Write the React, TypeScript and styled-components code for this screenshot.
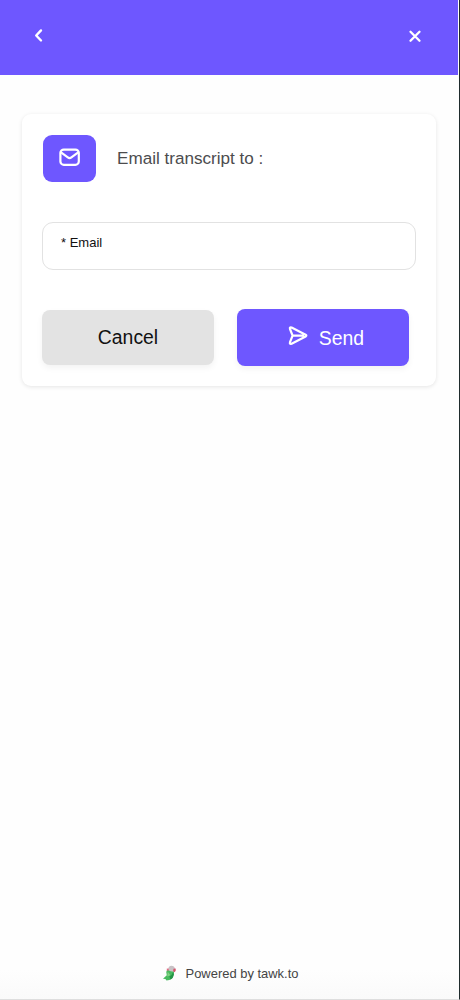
import React from 'react';
import styled, { createGlobalStyle } from 'styled-components';

const Global = createGlobalStyle`
  *, *::before, *::after { box-sizing: border-box; }
  body { margin: 0; background: #fff; }
  button, input { font: inherit; }
`;

const Widget = styled.div`
  display: flex;
  flex-direction: column;
  height: 1000px;
  width: 460px;
  border-right: 1px solid #1f2b2c;
  border-bottom: 1px solid #dedede;
  background: linear-gradient(#fefefe 970px, #fafafa);
  font-family: "Liberation Sans", Arial, Helvetica, sans-serif;
`;

const Header = styled.header`
  display: flex;
  justify-content: space-between;
  height: 75px;
  margin-right: 1px;
  padding: 25px 32px 0 28px;
  background: #6e57ff;
`;

const IconButton = styled.button`
  display: flex;
  align-items: center;
  justify-content: center;
  width: 22px;
  height: 22px;
  padding: 0;
  border: 0;
  background: none;
  color: #fff;
`;

const Card = styled.form`
  display: flex;
  flex-direction: column;
  width: 414px;
  height: 272px;
  margin: 39px 0 0 22px;
  padding: 21px 20px 0;
  border-radius: 9px;
  background: #fff;
  box-shadow: 0 1px 4px rgba(0, 0, 0, 0.1);
`;

const Title = styled.div`
  display: flex;
  align-items: center;
  gap: 21px;
  height: 47px;
  padding-left: 1px;
  color: #4c4c4e;
  font-size: 17.1px;
`;

const Tile = styled.span`
  display: flex;
  justify-content: center;
  width: 53px;
  height: 47px;
  padding-top: 12px;
  border-radius: 9px;
  background: #6e57ff;
`;

const Field = styled.label`
  display: block;
  width: 374px;
  height: 48px;
  margin-top: 40px;
  padding: 12px 18px;
  border: 1px solid #e2e2e2;
  border-radius: 11px;
  color: #111;
  font-size: 13px;
  line-height: 16px;
`;

const Actions = styled.div`
  display: flex;
  align-items: center;
  gap: 23px;
  margin-top: 39px;
`;

const Button = styled.button<{ $primary?: boolean }>`
  display: flex;
  align-items: center;
  justify-content: center;
  gap: 10px;
  width: 172px;
  height: ${(p) => (p.$primary ? 57 : 55)}px;
  padding: ${(p) => (p.$primary ? '2px 0 0 6px' : '0')};
  border: 0;
  border-radius: 8px;
  background: ${(p) => (p.$primary ? '#6e57ff' : '#e3e3e3')};
  color: ${(p) => (p.$primary ? '#fff' : '#111')};
  box-shadow: 0 3px 6px rgba(0, 0, 0, 0.05);
  font-size: 19.4px;

  svg { margin-bottom: 6px; }
`;

const Footer = styled.footer`
  display: flex;
  align-items: center;
  justify-content: center;
  gap: 9px;
  height: 20px;
  margin: auto 0 16px;
  padding-left: 1px;
  color: #444;
  font-size: 12.95px;
`;

const BackIcon = () => (
  <svg width="22" height="22" viewBox="0 0 22 22" fill="none" stroke="#fff" strokeWidth="2.4" strokeLinecap="round" strokeLinejoin="round">
    <path d="M13 5.4 8.2 10.5l4.8 5" />
  </svg>
);

const CloseIcon = () => (
  <svg width="22" height="22" viewBox="0 0 22 22" fill="none" stroke="#fff" strokeWidth="2.3" strokeLinecap="round">
    <path d="m6.5 6.7 9 9m0-9-9 9" />
  </svg>
);

const MailIcon = () => (
  <svg width="22" height="20" viewBox="0 0 22 20" fill="none" stroke="#fff" strokeWidth="2.2" strokeLinejoin="round" strokeLinecap="round">
    <rect x="1.4" y="2.6" width="18.4" height="15.2" rx="3.4" />
    <path d="m2 5.4 6.8 5q1.8 1.3 3.6 0l6.8-5" />
  </svg>
);

const SendIcon = () => (
  <svg width="21" height="20" viewBox="0 0 21 20" fill="none" stroke="#fff" strokeWidth="2.2" strokeLinejoin="round" strokeLinecap="round">
    <path d="M3.6 1.6 17.6 8.7q1.5.9 0 1.8L3.6 17.7Q1.3 18.5 2 16.2L4.6 9.6 2 3Q1.3.9 3.6 1.6ZM4.8 9.6h10.2" />
  </svg>
);

const ParrotIcon = () => (
  <svg width="15" height="16" viewBox="0 0 15 16">
    <path d="M5.4 4Q3.4 7 4.8 10.2L1 13.8l2.4.2 1.1 1.4Q11 15.4 11.8 9.8l.2-4L8 4Z" fill="#49ba5f" />
    <path d="M5.7 6.8 5.3 11.5l3.2-1.2Z" fill="#85d283" />
    <path d="M7.4 11.2q2.8-1 3.7-4.2l.8 2.2q-.5 3.8-3.5 5.4Z" fill="#249447" />
    <path d="M6 4.9Q6.2 1 9.4.8q3 0 3.6 3l-1.3 3-3.2-.5Z" fill="#c8c2c5" />
    <path d="m11.5 3.8 2.2-.2q.6 2.1-1 3.7l-1.6-1.1Z" fill="#d6536b" />
    <path d="m4.8 3.5 2.1.2-.5 2.1-1.6-.4Z" fill="#e46a83" />
  </svg>
);

export default function App() {
  return (
    <>
      <Global />
      <Widget>
        <Header>
          <IconButton aria-label="Back"><BackIcon /></IconButton>
          <IconButton aria-label="Close"><CloseIcon /></IconButton>
        </Header>
        <Card onSubmit={(e) => e.preventDefault()}>
          <Title>
            <Tile><MailIcon /></Tile>
            <span>Email transcript to :</span>
          </Title>
          <Field>* Email</Field>
          <Actions>
            <Button type="button">Cancel</Button>
            <Button $primary type="submit"><SendIcon />Send</Button>
          </Actions>
        </Card>
        <Footer><ParrotIcon /><span>Powered by tawk.to</span></Footer>
      </Widget>
    </>
  );
}
